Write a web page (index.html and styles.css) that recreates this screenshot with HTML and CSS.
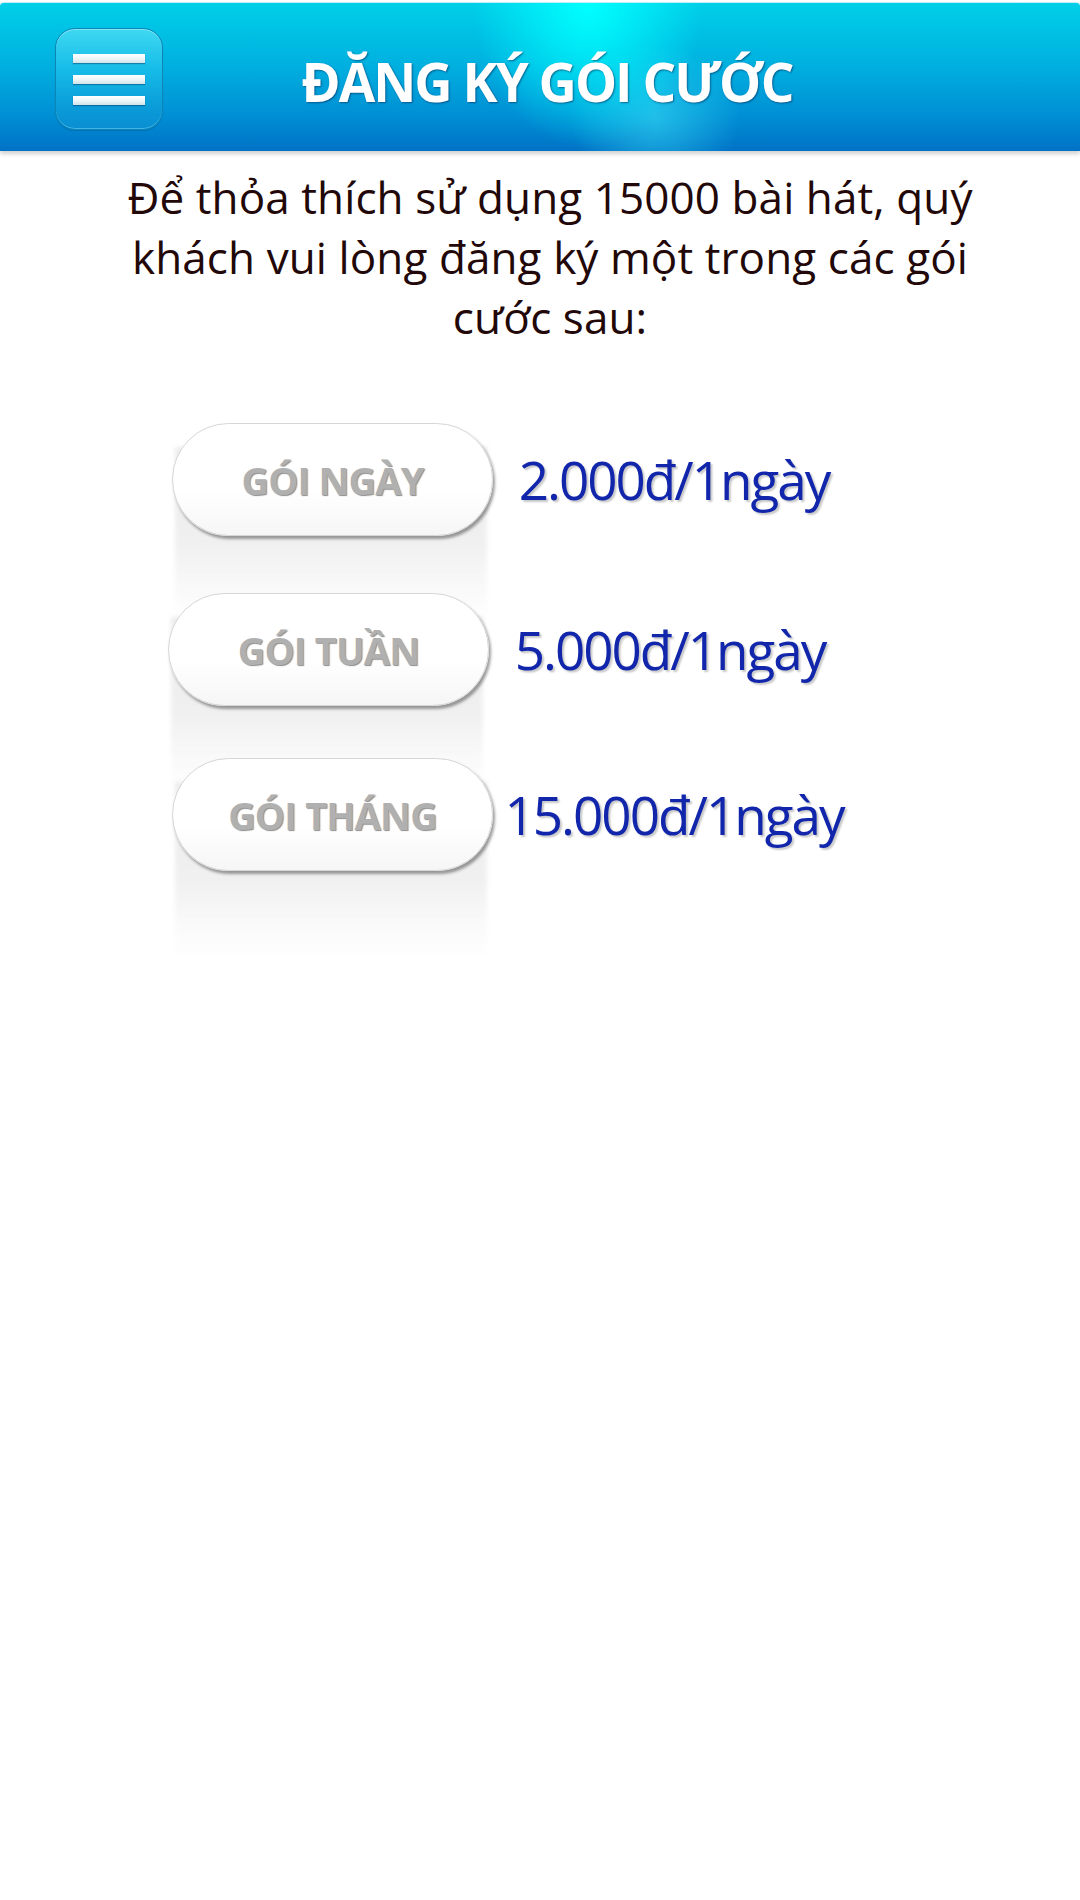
FILE: index.html
```html
<!DOCTYPE html>
<html lang="vi">
<head>
<meta charset="utf-8">
<title>Đăng ký gói cước</title>
<link rel="stylesheet" href="styles.css">
</head>
<body>
<header class="header">
  <button class="menu-btn" aria-label="Menu">
    <span class="menu-line"></span>
    <span class="menu-line"></span>
    <span class="menu-line"></span>
  </button>
  <h1 class="title">ĐĂNG KÝ GÓI CƯỚC</h1>
</header>
<main class="content">
  <p class="intro">Để thỏa thích sử dụng 15000 bài hát, quý khách vui lòng đăng ký một trong các gói cước sau:</p>
  <div class="plans">
    <div class="plan">
      <div class="plan-btn-wrap"><button class="plan-btn">GÓI NGÀY</button></div>
      <div class="price">2.000đ/1ngày</div>
    </div>
    <div class="plan plan-shift">
      <div class="plan-btn-wrap"><button class="plan-btn">GÓI TUẦN</button></div>
      <div class="price">5.000đ/1ngày</div>
    </div>
    <div class="plan plan-tight">
      <div class="plan-btn-wrap"><button class="plan-btn">GÓI THÁNG</button></div>
      <div class="price">15.000đ/1ngày</div>
    </div>
  </div>
</main>
</body>
</html>
```
FILE: styles.css
```css
html, body {
  margin: 0;
  padding: 0;
  background: #ffffff;
}

body {
  font-family: "Open Sans", "Noto Sans", sans-serif;
  width: 1080px;
  min-height: 1900px;
}

.header {
  margin-top: 2px;
  height: 148px;
  display: grid;
  grid-template-columns: 1fr auto 1fr;
  align-items: center;
  background:
    radial-gradient(ellipse 115px 145px at 588px 0px, rgba(0,255,255,1) 0%, rgba(0,255,255,0.6) 40%, rgba(0,255,255,0) 100%),
    radial-gradient(ellipse 85px 75px at 655px 115px, rgba(60,230,250,0.55) 0%, rgba(60,230,250,0) 100%),
    linear-gradient(to bottom, #00cfe8 0%, #00b2e0 40%, #0090d4 75%, #0072c6 100%);
  border-top: 1px solid #bfeef8;
  border-radius: 4px 4px 0 0;
  box-shadow: 0 3px 4px rgba(0, 0, 0, 0.18);
}

.menu-btn {
  grid-column: 1;
  justify-self: start;
  margin-left: 55px;
  margin-top: 4px;
  width: 108px;
  height: 102px;
  padding: 0;
  border: 1px solid #0d86b6;
  border-radius: 20px;
  background: linear-gradient(to bottom, #3fd8f2 0%, #16bce8 40%, #0a9ad8 80%, #0a8ed2 100%);
  box-shadow: inset 0 1px 0 rgba(255,255,255,0.35), inset 0 -1px 0 rgba(120,220,250,0.5), 0 1px 1px rgba(0,60,120,0.25);
  display: flex;
  flex-direction: column;
  align-items: center;
  justify-content: center;
  gap: 12px;
  cursor: pointer;
}

.menu-line {
  display: block;
  width: 72px;
  height: 9px;
  background: linear-gradient(to bottom, #ffffff 0%, #eef6f8 50%, #cfe3ea 100%);
  box-shadow: 0 1px 1px rgba(0, 50, 100, 0.45);
}

.title {
  grid-column: 2;
  margin: 8px 0 0 14px;
  font-family: "Open Sans", "Noto Sans", sans-serif;
  font-weight: 700;
  font-size: 53px;
  letter-spacing: -2px;
  line-height: 1;
  color: #ffffff;
  text-shadow: 1px 1px 2px rgba(0, 30, 80, 0.55);
  white-space: nowrap;
}

.content {
  padding: 16px 0 200px;
}

.intro {
  margin: 0 0 0 100px;
  width: 900px;
  text-align: center;
  font-size: 44px;
  line-height: 60px;
  letter-spacing: 0.1px;
  color: #220808;
}

.plans {
  margin-top: 76px;
  display: flex;
  flex-direction: column;
  gap: 57px;
  padding-left: 172px;
}

.plan {
  display: flex;
  align-items: center;
}

.plan-shift {
  margin-left: -4px;
}

.plan-tight {
  margin-top: -5px;
}

.plan-btn-wrap {
  position: relative;
  width: 321px;
  height: 113px;
}

.plan-btn-wrap::before {
  content: "";
  position: absolute;
  left: 3px;
  right: 6px;
  top: 24px;
  bottom: -86px;
  background: linear-gradient(to bottom, #ececec 0%, #f0f0f0 55%, rgba(246,246,246,0.7) 78%, rgba(255,255,255,0) 100%);
  filter: blur(2px);
  z-index: 0;
}

.plan-btn {
  position: relative;
  z-index: 1;
  width: 321px;
  height: 113px;
  padding: 0;
  border: 1px solid #d6d6d6;
  border-radius: 57px;
  background: linear-gradient(to bottom, #ffffff 0%, #ffffff 60%, #f6f6f6 100%);
  box-shadow: 2px 3px 3px rgba(0, 0, 0, 0.38);
  font-family: "Open Sans", "Noto Sans", sans-serif;
  font-weight: 700;
  font-size: 38px;
  letter-spacing: -0.8px;
  color: #b0b0b0;
  text-shadow: 1px 1px 1px rgba(80, 80, 80, 0.65), -1px -1px 0 rgba(255,255,255,0.6);
  cursor: pointer;
}

.price {
  width: 362px;
  text-align: center;
  font-size: 53px;
  letter-spacing: -2px;
  line-height: 1;
  color: #1226ac;
  text-shadow: 2px 2px 2px rgba(0, 0, 0, 0.22);
  white-space: nowrap;
}
```
